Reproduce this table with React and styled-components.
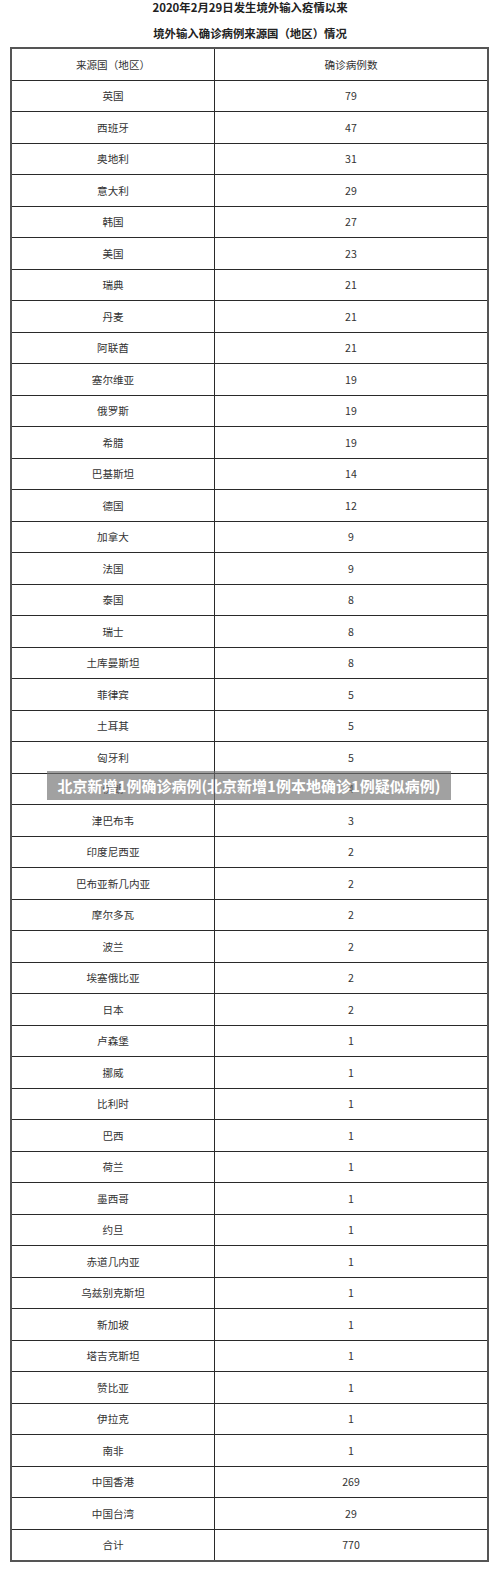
import React from "react";
import styled, { createGlobalStyle } from "styled-components";

const GlobalStyle = createGlobalStyle`
  html, body {
    margin: 0;
    padding: 0;
    background: #fff;
  }
  body {
    font-family: "Noto Sans CJK SC", "Noto Sans", sans-serif;
    color: #333;
  }
`;

const Page = styled.div`
  width: 500px;
  position: relative;
`;

const Title = styled.p`
  margin: 0;
  height: ${(p) => p.h}px;
  line-height: ${(p) => p.lh}px;
  text-align: center;
  font-size: 11.4px;
  font-weight: bold;
  color: #222;
`;

const TableWrap = styled.div`
  position: relative;
  padding: 0 11px 0 10px;
`;

const Table = styled.table`
  width: 100%;
  border-collapse: collapse;
  table-layout: fixed;
  border: 2px solid #555;
`;

const Cell = styled.td`
  height: 30.5px;
  padding: 0;
  border: 1px solid #2a2a2a;
  text-align: center;
  vertical-align: middle;
  font-size: 10.6px;
  color: #333;
  width: ${(p) => p.w || "auto"};
`;

const Banner = styled.div`
  position: absolute;
  left: 47px;
  top: 724px;
  width: 404px;
  height: 29px;
  background: rgba(110, 110, 110, 0.65);
  color: #fff;
  font-weight: bold;
  font-size: 15px;
  line-height: 29px;
  text-align: center;
  white-space: nowrap;
`;

const rows = [
  ["英国", 79],
  ["西班牙", 47],
  ["奥地利", 31],
  ["意大利", 29],
  ["韩国", 27],
  ["美国", 23],
  ["瑞典", 21],
  ["丹麦", 21],
  ["阿联酋", 21],
  ["塞尔维亚", 19],
  ["俄罗斯", 19],
  ["希腊", 19],
  ["巴基斯坦", 14],
  ["德国", 12],
  ["加拿大", 9],
  ["法国", 9],
  ["泰国", 8],
  ["瑞士", 8],
  ["土库曼斯坦", 8],
  ["菲律宾", 5],
  ["土耳其", 5],
  ["匈牙利", 5],
  ["伊朗", 4],
  ["津巴布韦", 3],
  ["印度尼西亚", 2],
  ["巴布亚新几内亚", 2],
  ["摩尔多瓦", 2],
  ["波兰", 2],
  ["埃塞俄比亚", 2],
  ["日本", 2],
  ["卢森堡", 1],
  ["挪威", 1],
  ["比利时", 1],
  ["巴西", 1],
  ["荷兰", 1],
  ["墨西哥", 1],
  ["约旦", 1],
  ["赤道几内亚", 1],
  ["乌兹别克斯坦", 1],
  ["新加坡", 1],
  ["塔吉克斯坦", 1],
  ["赞比亚", 1],
  ["伊拉克", 1],
  ["南非", 1],
  ["中国香港", 269],
  ["中国台湾", 29],
  ["合计", 770],
];

export default function App() {
  return (
    <>
      <GlobalStyle />
      <Page>
        <Title h={20} lh={14}>2020年2月29日发生境外输入疫情以来</Title>
        <Title h={27} lh={26}>境外输入确诊病例来源国（地区）情况</Title>
        <TableWrap>
          <Table>
            <tbody>
              <tr>
                <Cell w="202px">来源国（地区）</Cell>
                <Cell>确诊病例数</Cell>
              </tr>
              {rows.map(([name, count]) => (
                <tr key={name}>
                  <Cell>{name}</Cell>
                  <Cell>{count}</Cell>
                </tr>
              ))}
            </tbody>
          </Table>
          <Banner>北京新增1例确诊病例(北京新增1例本地确诊1例疑似病例)</Banner>
        </TableWrap>
      </Page>
    </>
  );
}
